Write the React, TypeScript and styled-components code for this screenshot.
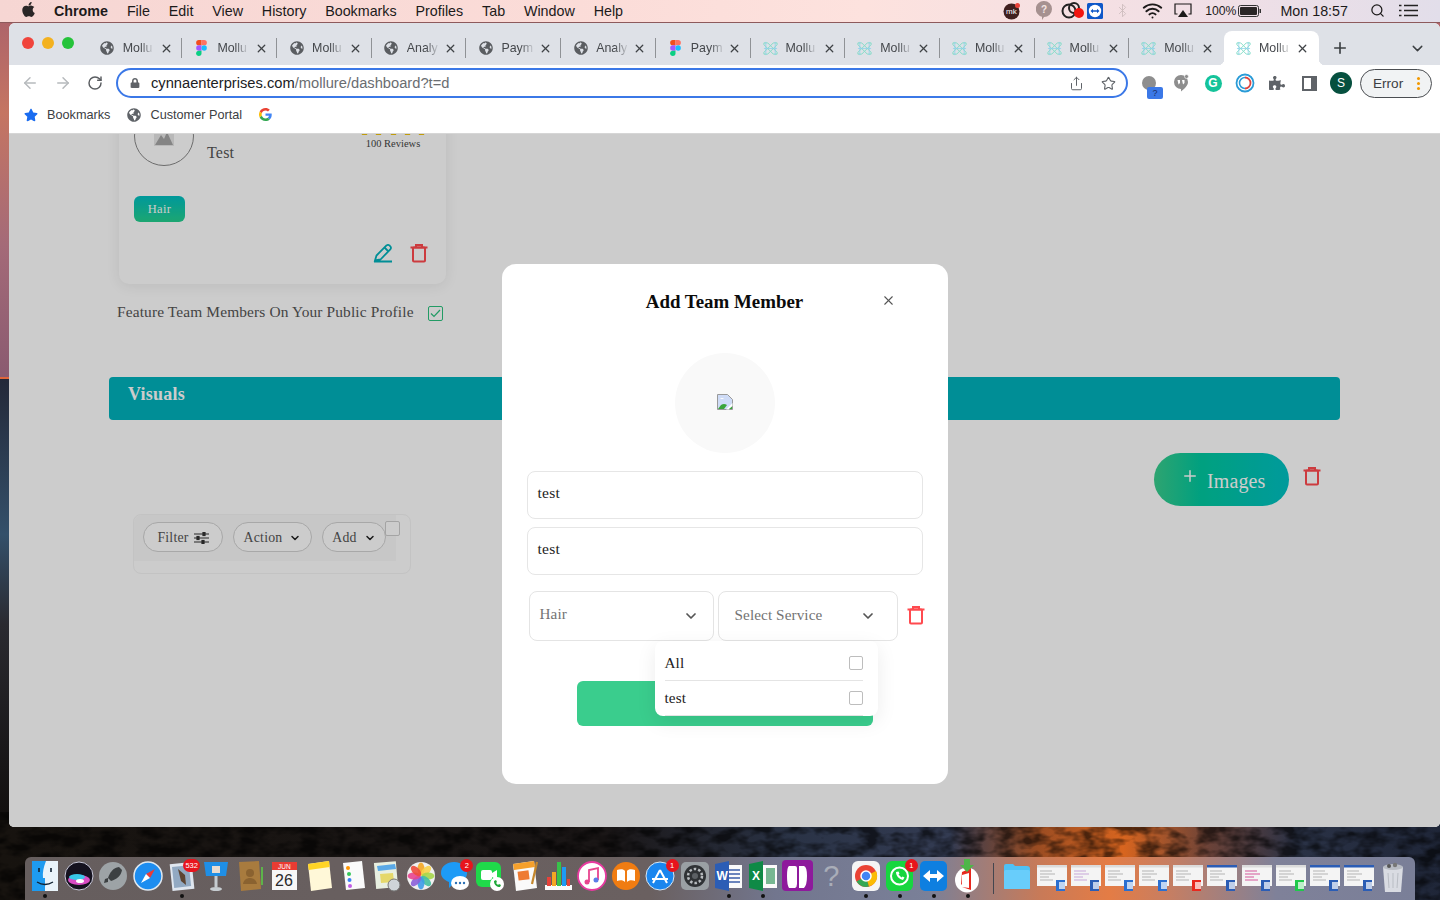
import React from "react";
import styled, { createGlobalStyle } from "styled-components";
import { ArrowLeft, ArrowRight, RotateCw, Star, Share, X, ChevronDown, Plus, Search, Wifi, Bluetooth } from "lucide-react";
import { FaApple, FaGlobeAmericas, FaPuzzlePiece, FaLock, FaStar } from "react-icons/fa";

const SERIF = `"Liberation Serif", "DejaVu Serif", serif`;
const SANS = `"Liberation Sans", Arial, sans-serif`;

const Global = createGlobalStyle`
  html, body { margin: 0; padding: 0; width: 1440px; height: 900px; overflow: hidden; }
  * { box-sizing: border-box; }
  body { font-family: ${SANS}; }
`;

const Desktop = styled.div`
  position: relative; width: 1440px; height: 900px; overflow: hidden; background: #1a1614;
`;
const WallpaperArt = styled.svg`
  position: absolute; inset: 0; width: 1440px; height: 900px;
`;

/* ---------- menu bar ---------- */
const MenuBar = styled.header`
  position: relative; height: 23px; display: flex; align-items: center; padding: 0 0 1px 20px;
  background: linear-gradient(to right, #f6d6d3, #fbdcd8 40%, #fde2de 60%, #f0dfe6 85%, #e2deea);
  border-bottom: 1px solid #8d5a5c; color: #1c1a1a; font-size: 14.3px;
`;
const AppleMark = styled.span`display: flex; margin-right: 17px; font-size: 16px; color: #2a2626; margin-top: -2px;`;
const MenuList = styled.nav`display: flex; gap: 18.85px;`;
const MenuItem = styled.span<{ $bold?: boolean }>`font-weight: ${(p) => (p.$bold ? 700 : 400)}; white-space: nowrap;`;
const StatusArea = styled.div`margin-left: auto; display: flex; align-items: center; height: 22px; padding-right: 22px;`;
const StatusSlot = styled.span<{ $ml: number; $fs?: number }>`
  display: flex; align-items: center; justify-content: center; margin-left: ${(p) => p.$ml}px;
  ${(p) => (p.$fs ? `font-size:${p.$fs}px;` : "")} white-space: nowrap; color: #1c1a1a;
`;

/* ---------- browser ---------- */
const BrowserWindow = styled.div`
  position: relative; margin-left: 9px; height: 804px; display: flex; flex-direction: column;
  border-radius: 6px 6px 5px 5px; overflow: hidden; background: #fff;
`;
const TabStrip = styled.div`
  height: 42px; background: #dee1e7; display: flex; align-items: flex-end; flex: none;
`;
const Lights = styled.div`width: 78.7px; height: 100%; display: flex; gap: 8px; padding: 14px 0 0 13px; flex: none;`;
const Light = styled.span<{ $c: string }>`width: 12px; height: 12px; border-radius: 50%; background: ${(p) => p.$c};`;
const TabRow = styled.div`display: flex; align-items: flex-end; height: 34px;`;
const Tab = styled.div<{ $active?: boolean; $sep?: boolean }>`
  position: relative; width: 94.7px; height: 34px; display: flex; align-items: center; padding: 0 9.5px 0 12px;
  color: #45484c; font-size: 12.4px;
  ${(p) => (p.$active ? "background:#fff;border-radius:8px 8px 0 0;" : "")}
  ${(p) => p.$sep ? `&::after{content:"";position:absolute;right:0;top:7px;height:20px;width:1px;background:#8f9296;}` : ""}
  ${(p) => p.$active ? `
    &::before{content:"";position:absolute;left:-6px;bottom:0;width:6px;height:6px;background:radial-gradient(circle at 0 0,transparent 6px,#fff 6.5px);}
    &::after{content:"";position:absolute;right:-6px;bottom:0;width:6px;height:6px;background:radial-gradient(circle at 100% 0,transparent 6px,#fff 6.5px);}
  ` : ""}
`;
const TabIcon = styled.span`width: 15px; height: 15px; display: flex; align-items: center; justify-content: center; flex: none; color: #5a5d61;`;
const TabTitle = styled.span`
  margin-left: 8px; white-space: nowrap;
  -webkit-mask-image: linear-gradient(to right, #000 60%, rgba(0,0,0,.15) 100%);
  mask-image: linear-gradient(to right, #000 60%, rgba(0,0,0,.15) 100%);
`;
const TabClose = styled.span`margin-left: auto; display: flex; color: #3f4246;`;
const StripTail = styled.div`display: flex; align-items: center; height: 34px; flex: 1; color: #3c4043; padding-left: 12px; padding-right: 14px; justify-content: space-between;`;

const Toolbar = styled.div`
  height: 36px; flex: none; background: #fff; display: flex; align-items: center; padding-left: 12px; color: #b4b7ba;
`;
const NavButton = styled.span<{ $ml?: number; $dark?: boolean }>`
  display: flex; margin-left: ${(p) => p.$ml ?? 0}px; color: ${(p) => (p.$dark ? "#5a5d61" : "#b7babd")};
`;
const Omnibox = styled.div`
  margin-left: 13px; width: 1012px; height: 30px; border: 2px solid #3b78e7; border-radius: 15px; display: flex;
  align-items: center; padding: 0 10px 0 12px; font-size: 14.7px; color: #6a6d71; background: #fff;
`;
const LockMark = styled.span`display: flex; color: #5f6368; margin-right: 11px;`;
const UrlHost = styled.span`color: #202124;`;
const OmniActions = styled.span`margin-left: auto; display: flex; gap: 17px; color: #5f6368;`;
const ExtRow = styled.div`display: flex; margin-left: 5px; align-items: center;`;
const ExtSlot = styled.span`position: relative; width: 32px; height: 28px; display: flex; align-items: center; justify-content: center; color: #5f6368;`;
const QuestionBadge = styled.span`
  position: absolute; right: 2px; bottom: -2px; width: 16px; height: 12px; border-radius: 2px; background: #3b78e7;
  color: #1a2f66; font-size: 9px; text-align: center; line-height: 12px;
`;
const GrammarlyDot = styled.span`
  width: 17px; height: 17px; border-radius: 50%; background: #15c39a; color: #fff; font-size: 12px; font-weight: 700;
  display: flex; align-items: center; justify-content: center;
`;
const ProfileDot = styled.span`
  width: 22px; height: 22px; border-radius: 50%; background: #06503f; color: #fff; font-size: 12px;
  display: flex; align-items: center; justify-content: center;
`;
const ErrorPill = styled.div`
  margin-left: 3px; width: 72px; height: 29px; border: 1.5px solid #4b4e52; border-radius: 15px; background: #f1f3f4;
  display: flex; align-items: center; justify-content: space-between; padding: 0 11px 0 12px; font-size: 13.6px; color: #3c4043;
`;
const Kebab = styled.span`display: flex; flex-direction: column; gap: 2px;`;
const KebabDot = styled.i`width: 3px; height: 3px; border-radius: 50%; background: #f29900; display: block;`;

const BookmarksBar = styled.div`
  height: 33px; flex: none; background: #fff; display: flex; align-items: center; padding: 0 0 5px 15px;
  font-size: 12.7px; color: #3c4043; border-bottom: 1px solid #d6d6d6;
`;
const Bookmark = styled.span<{ $ml?: number }>`display: flex; align-items: center; gap: 9px; margin-left: ${(p) => p.$ml ?? 0}px;`;

/* ---------- page behind the modal ---------- */
const Page = styled.main`position: relative; flex: 1; overflow: hidden; background: #fff; font-family: ${SERIF};`;
const MemberCard = styled.section`
  margin: -70px 0 0 110px; width: 327px; height: 220px; padding: 42px 17px 0 15px; border-radius: 10px; background: #fff;
  box-shadow: 0 2px 14px rgba(0,0,0,.08);
`;
const CardTop = styled.div`display: flex; height: 60px;`;
const CardAvatar = styled.div`
  width: 60px; height: 60px; border-radius: 50%; border: 1px solid #888; display: flex; align-items: center; justify-content: center; flex: none;
`;
const MemberName = styled.div`margin: 37px 0 0 13px; font-size: 16px; line-height: 20px; color: #555; letter-spacing: .2px;`;
const Rating = styled.div`margin: 23px 3px 0 auto; width: 66px; text-align: center;`;
const StarRow = styled.div`display: flex; justify-content: space-between; color: #f1c40f; height: 6px; overflow: hidden;`;
const ReviewCount = styled.div`font-size: 10.5px; line-height: 12px; color: #444; margin-top: 3px; white-space: nowrap;`;
const Tag = styled.div`
  margin-top: 30px; width: 51px; height: 26px; border-radius: 6px; background: linear-gradient(#00bfc2, #24d08e);
  color: #fff; font-size: 12.5px; padding-top: 1px; display: flex; align-items: center; justify-content: center; letter-spacing: .3px;
`;
const CardActions = styled.div`margin-top: 21px; display: flex; justify-content: flex-end; gap: 16px; align-items: center;`;
const FeatureRow = styled.div`margin: 22px 0 0 108px; width: 326px; height: 15px; display: flex; align-items: center; justify-content: space-between;`;
const FeatureLabel = styled.span`font-size: 15.4px; color: #555; letter-spacing: .14px; white-space: nowrap; margin-top: -3px;`;
const GreenCheck = styled.span`
  width: 15px; height: 15px; border: 1px solid #2bc27e; border-radius: 2px; display: flex; align-items: center; justify-content: center;
`;
const SectionBar = styled.div`
  margin: 56px 0 0 100px; width: 1231px; height: 43px; background: #00b2bc; border-radius: 4px; padding: 7px 19px;
  color: #fff; font-size: 18px; font-weight: 700; letter-spacing: .25px;
`;
const ImagesRow = styled.div`margin: 33px 0 0 0; width: 1313px; display: flex; justify-content: flex-end; align-items: flex-start;`;
const ImagesButton = styled.div`
  width: 135px; height: 53px; border-radius: 27px; background: linear-gradient(to right, #3acd8d, #00c9a0 35%, #00c1c3);
  color: #fff; display: flex; align-items: center; padding-left: 27px; gap: 8px; font-size: 20px; letter-spacing: .1px;
`;
const ImagesPlus = styled.span`display: flex; margin-top: -8px;`;
const ImagesLabel = styled.span`margin-top: 4px;`;
const TrashGap = styled.span`margin: 13px 0 0 13px; display: flex;`;
const FilterPanel = styled.div`
  position: relative; margin: 8px 0 0 124px; width: 278px; height: 60px; border: 1px solid #f4f4f4; border-radius: 8px; background: #ffffff;
`;
const FilterBar = styled.div`
  width: 262px; height: 46px; background: #f9f9f9; display: flex; gap: 10px; padding: 7px 0 0 9px; border-radius: 8px 0 0 0;
`;
const PillButton = styled.div<{ $w: number; $gap: number }>`
  width: ${(p) => p.$w}px; height: 30px; flex: none; border-radius: 15px; border: 1px solid #d2d2d2; background: #fff; padding-top: 1px;
  display: flex; align-items: center; justify-content: center; gap: ${(p) => p.$gap}px; font-size: 13.8px; color: #555; letter-spacing: .2px;
`;
const CornerCheck = styled.span`
  position: absolute; left: 251px; top: 6px; width: 15px; height: 15px; border: 1px solid #cdcdcd; border-radius: 2px; background: #fff;
`;

/* ---------- modal ---------- */
const Overlay = styled.div`
  position: absolute; inset: 0; background: rgba(0,0,0,.2); display: flex; justify-content: center; align-items: flex-start; padding-top: 130px;
`;
const Modal = styled.div`
  position: relative; width: 446px; height: 520px; background: #fff; border-radius: 14px; padding: 0 25px;
`;
const ModalHeader = styled.div`
  display: grid; grid-template-columns: 1fr auto 1fr; align-items: center; padding-top: 26px; height: 49px;
`;
const ModalTitle = styled.h2`
  margin: 0; font-size: 18.9px; line-height: 23px; font-weight: 700; color: #0b0b0b; white-space: nowrap; grid-column: 2;
`;
const CloseButton = styled.span`grid-column: 3; justify-self: end; margin: -2px 27px 0 0; display: flex; color: #555;`;
const PhotoCircle = styled.div`
  margin: 40px auto 0; width: 100px; height: 100px; border-radius: 50%; background: #f9f9f9; display: flex; align-items: center; justify-content: center; padding-bottom: 2px;
`;
const TextField = styled.div<{ $mt: number }>`
  margin-top: ${(p) => p.$mt}px; height: 48px; border: 1px solid #e6e6e6; border-radius: 8px; padding: 11px 10px 0; font-size: 15.5px; line-height: 20px; color: #222; letter-spacing: .25px;
`;
const SelectRow = styled.div`margin: 16px 0 0 2px; display: flex; align-items: center;`;
const SelectBox = styled.div<{ $w: number; $ml: number; $pl: number; $pr: number }>`
  width: ${(p) => p.$w}px; height: 50px; flex: none; margin-left: ${(p) => p.$ml}px; border: 1px solid #e4e4e4; border-radius: 8px;
  display: flex; align-items: center; justify-content: space-between; padding: 0 ${(p) => p.$pr}px 0 ${(p) => p.$pl}px;
  font-size: 15.2px; color: #737373; letter-spacing: .1px;
`;
const SelectLabel = styled.span<{ $up: number }>`margin-top: -${(p) => p.$up}px;`;
const SelectTrash = styled.span`margin: -3px 0 0 8px; display: flex;`;
const SubmitButton = styled.div`margin: 40px auto 0; width: 296px; height: 45px; background: #3acd8d; border-radius: 6px;`;
const DropMenu = styled.div`
  position: absolute; left: 153px; top: 377px; width: 223px; height: 75px; background: #fff; border-radius: 8px; padding: 5px 15px 0 10px;
  box-shadow: 0 6px 20px rgba(0,0,0,.08);
`;
const DropRow = styled.div`
  height: 35px; display: flex; align-items: center; justify-content: space-between; border-bottom: 1px solid #e4e4e4; font-size: 15.2px; color: #222; letter-spacing: .1px;
`;
const DropCheck = styled.span`width: 14px; height: 14px; border: 1px solid #bdbdbd; border-radius: 2px;`;

/* ---------- dock ---------- */
const Dock = styled.footer`
  position: absolute; left: 25px; bottom: 0; width: 1390px; height: 43px; border-radius: 6px 6px 0 0; display: flex; padding-left: 3px;
  background: linear-gradient(to right, #665e5e 0, #6a6060 45%, #72768e 54%, #7a8098 65%, #c87a58 73%, #e47c45 78%, #c97e60 82%, #7f8199 90%, #7a7f98 100%);
`;
const DockSlot = styled.div`position: relative; width: 34.2px; height: 43px; flex: none; display: flex; justify-content: center; padding-top: 2px;`;
const DockBadge = styled.span`
  position: absolute; top: 2px; right: -1px; min-width: 13px; height: 13px; padding: 0 2px; border-radius: 7px; background: #e8141c; color: #fff; font-size: 7.5px;
  line-height: 13px; text-align: center; font-family: ${SANS};
`;
const RunDot = styled.i`position: absolute; left: 50%; bottom: 2px; margin-left: -2px; width: 4px; height: 4px; border-radius: 50%; background: #111;`;
const DockDivider = styled.div`width: 15px; flex: none; display: flex; justify-content: center; padding-top: 6px; height: 37px;`;
const DockLine = styled.i`width: 1px; height: 31px; background: #44464f; display: block; margin-left: 1px;`;
const HelpGlyph = styled.span`font-size: 29px; line-height: 34px; height: 34px; color: #a9adb8; font-family: ${SANS};`;

/* ---------- small drawings ---------- */
const Trash = ({ c, s = 20 }: { c: string; s?: number }) => (
  <svg width={s} height={s} viewBox="0 0 20 20" fill="none" stroke={c} strokeWidth="2">
    <path d="M1.5 4.5h17M7 4.5V2h6v2.5" />
    <rect x="4" y="4.5" width="12" height="14" rx="1" />
  </svg>
);
const Pen = () => (
  <svg width="20" height="20" viewBox="0 0 20 20" fill="none" stroke="#00b2bc" strokeWidth="1.8">
    <path d="M1 18.500h18M2 17.500l1.500-5L13.500 2.500a2 2 0 0 1 3 0l.8 .8a2 2 0 0 1 0 3L7.500 16.500z" />
    <path d="M11.500 4.500l4 4" />
  </svg>
);
const ImageGlyph = () => (
  <svg width="20" height="19" viewBox="0 0 20 19"><rect width="20" height="19" fill="#e6e6e6" /><path d="M1 18L7 8l3 4 3-7 6 13z" fill="#a6a6a6" /></svg>
);
const BrokenImage = () => (
  <svg width="16" height="16" viewBox="0 0 16 16">
    <path d="M.5.5h10l5 5v10H.5z" fill="#cfdcf7" stroke="#9a9a9a" />
    <path d="M3 5c1-1.500 3-1.500 4 0z" fill="#fff" />
    <path d="M1 15l3-4c2-1.500 4-1.500 6 0l-3 4z" fill="#3aa53a" />
    <path d="M9 15.500l6.500-6.500v3l-3.500 3.500z" fill="#fff" />
    <path d="M12 15l3-2.500V15z" fill="#3aa53a" />
  </svg>
);
const Tick = () => (
  <svg width="11" height="9" viewBox="0 0 11 9" fill="none" stroke="#2bc27e" strokeWidth="1.2"><path d="M1 4.500l3 3L10 1" /></svg>
);
const FilterGlyph = () => (
  <svg width="15" height="12" viewBox="0 0 15 12" stroke="#333" strokeWidth="1.2" fill="#333">
    <path d="M0 2h15M0 6h15M0 10h15" />
    <rect x="9" y=".5" width="2" height="3" /><rect x="3" y="4.500" width="2" height="3" /><rect x="8" y="8.500" width="2" height="3" />
  </svg>
);
const Figma = () => (
  <svg width="11" height="16" viewBox="0 0 12 18">
    <path d="M6 0H3a3 3 0 0 0 0 6h3z" fill="#f24e1e" /><path d="M6 0h3a3 3 0 0 1 0 6H6z" fill="#ff7262" />
    <path d="M6 6H3a3 3 0 0 0 0 6h3z" fill="#a259ff" /><circle cx="9" cy="9" r="3" fill="#1abcfe" />
    <path d="M6 12H3a3 3 0 1 0 3 3z" fill="#0acf83" />
  </svg>
);
const Knot = () => (
  <svg width="16" height="15" viewBox="0 0 16 15" fill="none" strokeWidth="1">
    <g stroke="#7fdcc6">
      <path d="M1 1.500l4 0 3 3-3 3-4-4zM15 1.500l-4 0-3 3 3 3 4-4z" />
      <path d="M1 13.500l4 0 3-3-3-3-4 4zM15 13.500l-4 0-3-3 3-3 4 4z" />
    </g>
    <g stroke="#8bd0ea" opacity=".8">
      <path d="M3 .5v14M13 .5v14M1 7.500h14" />
    </g>
  </svg>
);
const GoogleG = () => (
  <svg width="13" height="13" viewBox="0 0 48 48">
    <path fill="#ea4335" d="M24 9.500c3.500 0 6.600 1.200 9 3.500l6.800-6.800C35.700 2.400 30.300 0 24 0 14.600 0 6.500 5.400 2.600 13.200l7.900 6.100C12.400 13.600 17.700 9.500 24 9.500z" />
    <path fill="#4285f4" d="M47 24.500c0-1.600-.1-3.100-.4-4.500H24v9h13c-.6 3-2.200 5.500-4.700 7.200l7.600 5.900C44.300 37.900 47 31.800 47 24.500z" />
    <path fill="#fbbc05" d="M10.500 28.700C10 27.300 9.800 25.700 9.800 24s.3-3.300.7-4.700l-7.900-6.100C1 16.400 0 20.100 0 24s1 7.600 2.600 10.800z" />
    <path fill="#34a853" d="M24 48c6.500 0 11.900-2.100 15.900-5.900l-7.600-5.900c-2.200 1.400-5 2.300-8.300 2.300-6.300 0-11.600-4.100-13.500-9.800l-7.900 6.100C6.500 42.600 14.600 48 24 48z" />
  </svg>
);
const Battery = () => (
  <svg width="24" height="12" viewBox="0 0 24 12"><rect x=".5" y=".5" width="20" height="11" rx="2" fill="none" stroke="#333" /><rect x="2" y="2" width="17" height="8" rx="1" fill="#2a2626" /><rect x="21.500" y="4" width="1.500" height="4" fill="#333" /></svg>
);
const Airplay = () => (
  <svg width="18" height="15" viewBox="0 0 18 15"><path d="M3.500 11H1V1h16v10h-2.500" fill="none" stroke="#1c1a1a" strokeWidth="1.200" /><path d="M9 7l5 7H4z" fill="#1c1a1a" /></svg>
);
const ListGlyph = () => (
  <svg width="19" height="13" viewBox="0 0 19 13" stroke="#222" strokeWidth="1.600"><path d="M5 1.500h14M5 6.500h14M5 11.500h14M0 1.500h2.500M0 6.500h2.500M0 11.500h2.500" /></svg>
);
const MkBadge = () => (
  <svg width="18" height="18" viewBox="0 0 18 18"><circle cx="8.500" cy="9.500" r="8" fill="#40201f" /><text x="3" y="12" fontSize="8" fill="#fff" fontFamily="Liberation Sans">mk</text><circle cx="14.500" cy="3.500" r="2.500" fill="#e8423a" /></svg>
);
const AskBubble = () => (
  <svg width="16" height="19" viewBox="0 0 16 19"><path d="M8 0a8 8 0 0 1 0 16l-2 3v-3.200A8 8 0 0 1 8 0z" fill="#a69190" /><text x="5" y="12" fontSize="10" fill="#f4e4e2" fontFamily="Liberation Sans" fontWeight="700">?</text></svg>
);
const CloudRec = () => (
  <svg width="24" height="17" viewBox="0 0 24 17"><circle cx="8" cy="9" r="6.500" fill="none" stroke="#222" strokeWidth="2" /><circle cx="13" cy="6" r="5" fill="none" stroke="#222" strokeWidth="2" /><circle cx="18" cy="11" r="5" fill="#f0140f" /></svg>
);
const TvSquare = ({ s = 16 }: { s?: number }) => (
  <svg width={s} height={s} viewBox="0 0 16 16"><rect width="16" height="16" rx="1.500" fill="#0e57c8" /><circle cx="8" cy="8" r="6.200" fill="#fff" /><path d="M3.500 8l2.500-2.200v1.400h4V5.800L12.500 8 10 10.200V8.800H6v1.400z" fill="#0e57c8" /></svg>
);
const Hangout = () => (
  <svg width="16" height="19" viewBox="0 0 16 19"><path d="M8 1a7 7 0 0 1 7 7c0 4-4 7-7 9.500V15a7 7 0 0 1 0-14z" fill="#8e8e8e" /><path d="M4.500 6h2.500v3l-1.500 1.500zM9 6h2.500v3L10 10.500z" fill="#fff" /><circle cx="13.500" cy="2.500" r="2" fill="#8e8e8e" stroke="#fff" strokeWidth=".6" /></svg>
);
const ChromeSync = () => (
  <svg width="20" height="20" viewBox="0 0 20 20" fill="none"><circle cx="10" cy="10" r="8.500" stroke="#2a9bd7" strokeWidth="1.800" /><path d="M10 4.500a5.500 5.500 0 0 1 0 11" stroke="#e0443e" strokeWidth="1.800" /><path d="M10 15.500a5.500 5.500 0 0 1 0-11" stroke="#2a9bd7" strokeWidth="1.500" /></svg>
);
const SidePanel = () => (
  <svg width="15" height="15" viewBox="0 0 15 15"><rect x="1" y="1" width="13" height="13" fill="none" stroke="#5f6368" strokeWidth="2" /><rect x="9" y="1" width="5" height="13" fill="#5f6368" /></svg>
);
const GrayBlob = () => <svg width="14" height="14" viewBox="0 0 14 14"><circle cx="7" cy="7" r="7" fill="#8e8e8e" /></svg>;

/* dock icons */
const I = ({ children }: { children: React.ReactNode }) => <svg width="32" height="34" viewBox="0 0 32 34">{children}</svg>;
const T = (p: any) => <text fontFamily="Liberation Sans" {...p} />;
const icons: Record<string, React.ReactNode> = {
  finder: <I><rect x="3" y="2" width="26" height="30" fill="#e9f4fb" /><path d="M3 2h14q-4 10-3 17h2v13H3z" fill="#1e9bf0" /><path d="M8 23q8 5 16 0" fill="none" stroke="#123" strokeWidth="1.300" /><path d="M10 9v4M22 9v4" stroke="#123" strokeWidth="1.600" /></I>,
  siri: <I><circle cx="16" cy="17" r="14" fill="#15121f" stroke="#c9c9d9" /><ellipse cx="16" cy="21" rx="11" ry="5" fill="#d94bc4" /><ellipse cx="14" cy="18" rx="8" ry="3" fill="#38c6e8" /><ellipse cx="17" cy="22" rx="4" ry="2" fill="#fff" /></I>,
  launch: <I><circle cx="16" cy="17" r="14" fill="#9da3a6" /><path d="M22 8c-6 1-9 5-11 11l3 3c6-2 10-5 11-11z" fill="#3c4042" /><path d="M11 19l-3 1-1 4 4-1z" fill="#3c4042" /></I>,
  safari: <I><circle cx="16" cy="17" r="14" fill="#1d8df0" stroke="#dfe8f0" strokeWidth="1.500" /><path d="M23 10l-9 5 4 4z" fill="#ef3b36" /><path d="M9 24l5-9 4 4z" fill="#fff" /></I>,
  mail: <I><rect x="5" y="4" width="22" height="27" fill="#dfe6ef" transform="rotate(-6 16 17)" /><rect x="7" y="7" width="17" height="21" fill="#92a9c2" transform="rotate(-6 16 17)" /><path d="M12 10l7 6 1 10-5-4z" fill="#5d4533" /></I>,
  keynote: <I><path d="M4 3h24l-2 14H6z" fill="#1f8fe6" /><rect x="12" y="7" width="8" height="7" fill="#e9dcd0" /><rect x="14.500" y="17" width="3" height="11" fill="#c6ccd0" /><ellipse cx="16" cy="30" rx="6" ry="2" fill="#c6ccd0" /></I>,
  contacts: <I><path d="M5 3l20-1 2 28-20 2z" fill="#a87b3e" /><rect x="27" y="8" width="2" height="18" fill="#5db34a" /><circle cx="16" cy="14" r="4" fill="#8a6230" /><path d="M9 25c1-8 13-8 14 0z" fill="#8a6230" /></I>,
  cal: <I><rect x="4" y="3" width="25" height="28" fill="#f7f7f7" /><rect x="4" y="3" width="25" height="8" fill="#e93c33" /><T x="10" y="10" fontSize="6.500" fill="#fff">JUN</T><T x="7" y="27" fontSize="16" fill="#2a2a2a">26</T></I>,
  notes: <I><path d="M5 5l21-3 3 27-21 3z" fill="#fff8d8" /><path d="M5 5l21-3 .7 6-21 3z" fill="#ffd426" /></I>,
  remind: <I><path d="M6 4l19-2 3 27-19 2z" fill="#fafafa" /><circle cx="11" cy="9" r="2" fill="#ff9500" /><circle cx="12" cy="15" r="2" fill="#35c759" /><circle cx="12.500" cy="21" r="2" fill="#3b82f6" /><circle cx="13" cy="27" r="2" fill="#c25ce6" /></I>,
  maps: <I><rect x="4" y="3" width="22" height="26" fill="#e8efe0" transform="rotate(-5 16 16)" /><path d="M6 7l18-2 1 5-18 2z" fill="#5aa9e6" /><path d="M9 15l13-1 1 9-13 1z" fill="#e5d86a" /><circle cx="23" cy="26" r="6" fill="#cfd4d8" stroke="#777" /></I>,
  photos: <I><circle cx="16" cy="17" r="14" fill="#f0f0f0" />{["#f5a623","#f8d24a","#a6d64a","#44c0a0","#3d9be9","#8b5fd9","#e8448f","#ee4c3c"].map((c, i) => <ellipse key={c} cx="16" cy="10" rx="3.500" ry="6.500" fill={c} opacity=".9" transform={`rotate(${i * 45} 16 17)`} />)}</I>,
  msg: <I><path d="M15 3c8 0 13 5 13 11s-5 10-13 10l-5 5v-6C5 21 2 18 2 14 2 7 8 3 15 3z" fill="#1d9bf6" /><ellipse cx="21" cy="24" rx="9" ry="7" fill="#fff" /><circle cx="17" cy="24" r="1.200" fill="#2b6fb5" /><circle cx="21" cy="24" r="1.200" fill="#2b6fb5" /><circle cx="25" cy="24" r="1.200" fill="#2b6fb5" /></I>,
  face: <I><rect x="2" y="3" width="25" height="25" rx="6" fill="#1fd94a" /><rect x="7" y="11" width="11" height="10" rx="2" fill="#fff" /><path d="M18 14l5-3v10l-5-3z" fill="#fff" /><circle cx="23" cy="25" r="7" fill="#fff" /><path d="M20 22c0 4 3 6 6 6l1-2-2-1-1 1-2-2 1-1-1-2z" fill="#1fa83a" /></I>,
  pages: <I><path d="M5 5l21-3 3 27-21 3z" fill="#fafafa" /><path d="M5 5l21-3 1 6-21 3z" fill="#f5a02c" /><rect x="10" y="12" width="11" height="9" fill="#ee7b33" transform="rotate(-7 15 16)" /><path d="M29 3l-5 22" stroke="#c5872c" strokeWidth="2.200" /></I>,
  numbers: <I><rect x="3" y="26" width="27" height="5" fill="#fafafa" /><rect x="5" y="18" width="4" height="9" fill="#e8423a" /><rect x="10" y="13" width="4" height="14" fill="#f5a623" /><rect x="15" y="3" width="4" height="24" fill="#38c24a" /><rect x="20" y="8" width="4" height="19" fill="#1d9bf6" /><rect x="25" y="20" width="3" height="7" fill="#e8423a" /></I>,
  music: <I><circle cx="16" cy="17" r="14" fill="#fff" stroke="#e83aa0" strokeWidth="1.800" /><path d="M13 23V11l9-2v12" fill="none" stroke="#e8448f" strokeWidth="1.800" /><circle cx="11" cy="23" r="2.500" fill="#e8448f" /><circle cx="20" cy="21" r="2.500" fill="#5b7de9" /></I>,
  books: <I><circle cx="16" cy="17" r="14" fill="#f07c12" /><path d="M7 11c3-1 7-1 8 1v11c-2-2-5-2-8-1zM25 11c-3-1-7-1-8 1v11c2-2 5-2 8-1z" fill="#fff" /></I>,
  store: <I><circle cx="16" cy="17" r="14" fill="#1a86ee" stroke="#d8e6f2" /><path d="M9 24l7-13M23 24l-7-13M8 20h16" stroke="#fff" strokeWidth="2" fill="none" /></I>,
  prefs: <I><rect x="2" y="3" width="28" height="28" rx="5" fill="#9aa0a4" /><circle cx="16" cy="17" r="11" fill="#2f3235" /><circle cx="16" cy="17" r="7" fill="none" stroke="#b8bcbf" strokeWidth="2.500" strokeDasharray="2.500 2" /><circle cx="16" cy="17" r="3" fill="#5c6064" /></I>,
  word: <I><rect x="10" y="6" width="19" height="23" fill="#fafafa" /><path d="M13 11h14M13 15h14M13 19h14M13 23h14" stroke="#3b5ea8" strokeWidth="1.300" /><path d="M2 5l14-3v30L2 29z" fill="#2b5db5" /><T x="3.500" y="21" fontSize="12" fill="#fff" fontWeight="700">W</T></I>,
  excel: <I><rect x="10" y="6" width="20" height="23" fill="#fafafa" /><path d="M19 9h9v16h-9z" fill="#1f8a4c" opacity=".6" /><path d="M2 5l14-3v30L2 29z" fill="#0f8a46" /><T x="5" y="21" fontSize="12" fill="#fff" fontWeight="700">X</T></I>,
  purple: <I><rect x="1" y="1" width="31" height="31" rx="4" fill="#8e1a9c" /><path d="M8 7q-2 1-2 10t2 12h6q2-1 2-4V9q0-2-2-2zM18 7h5q3 1 3 10t-3 12h-5z" fill="#fff" /></I>,
  ask: <HelpGlyph>?</HelpGlyph>,
  chrome: <I><rect x="2" y="2" width="28" height="30" rx="6" fill="#f5f5f5" /><circle cx="16" cy="17" r="11" fill="#ea4335" /><path d="M16 17L6.500 22.500A11 11 0 0 0 19 27.600z" fill="#34a853" /><path d="M16 17l3 10.600A11 11 0 0 0 26 12z" fill="#fbbc05" /><circle cx="16" cy="17" r="5" fill="#4285f4" stroke="#fff" strokeWidth="1.500" /></I>,
  whats: <I><rect x="2" y="2" width="27" height="30" rx="6" fill="#17d63f" /><circle cx="15.500" cy="17" r="8.500" fill="none" stroke="#fff" strokeWidth="2" /><path d="M12 13c0 4 3 7 7 8l1.500-2.500-2-1-1 1-3-3 1-1-1-2z" fill="#fff" /></I>,
  tv: <I><rect x="2" y="2" width="27" height="30" rx="5" fill="#0e7fe0" /><path d="M5 17l7-6v4h7v-4l7 6-7 6v-4h-7v4z" fill="#fff" /></I>,
  office: <I><ellipse cx="15" cy="21" rx="12" ry="12.500" fill="#fff" /><path d="M10 13l9-4v22l-9-3 7 1V14l-7 2v9l-1 1z" fill="#e8281e" /><path d="M12 0h6v6h4l-7 7-7-7h4z" fill="#4eb648" /></I>,
  folder: <I><path d="M3 7q0-2 2-2h7l2 2h12q3 0 3 3v20H3z" fill="#4fc1f5" /><rect x="3" y="11" width="26" height="19" rx="1.500" fill="#68cdfb" /></I>,
  trash: <I><path d="M6 8h20l-2 25H8z" fill="#e3e6ea" opacity=".9" /><ellipse cx="16" cy="8" rx="10" ry="3" fill="#b8bcc4" /><circle cx="12" cy="7" r="2" fill="#555" /><circle cx="18" cy="6" r="2.200" fill="#777" /><path d="M11 14l1 15M16 14v15M21 14l-1 15" stroke="#b9bdc4" /></I>,
};
const DocThumb = ({ badge, art, h = 21 }: { badge: string; art: string; h?: number }) => (
  <I>
    <rect x="1" y="6" width="30" height={h} fill="#f4f4f4" />
    <rect x="1" y="6" width="30" height="2.500" fill={art === "blue" ? "#2b5db5" : "#dcdcdc"} />
    <path d="M4 12h12M4 15h15M4 18h9M4 21h13" stroke={art === "pink" ? "#d4569a" : art === "yellow" ? "#c7a6d8" : "#b4b4b4"} strokeWidth="1" />
    <rect x="20" y="21" width="9" height="11" fill={badge} />
    <rect x="23" y="23" width="6" height="7" fill="#fff" opacity=".7" />
  </I>
);

const tabs: { icon: "globe" | "figma" | "knot"; title: string; active?: boolean }[] = [
  { icon: "globe", title: "Mollu" }, { icon: "figma", title: "Mollu" }, { icon: "globe", title: "Mollu" },
  { icon: "globe", title: "Analy" }, { icon: "globe", title: "Paym" }, { icon: "globe", title: "Analy" },
  { icon: "figma", title: "Paym" }, { icon: "knot", title: "Mollu" }, { icon: "knot", title: "Mollu" },
  { icon: "knot", title: "Mollu" }, { icon: "knot", title: "Mollu" }, { icon: "knot", title: "Mollu" },
  { icon: "knot", title: "Mollu", active: true },
];
const menus = ["File", "Edit", "View", "History", "Bookmarks", "Profiles", "Tab", "Window", "Help"];
const dockLeft: { k: string; badge?: string; run?: boolean }[] = [
  { k: "finder", run: true }, { k: "siri" }, { k: "launch" }, { k: "safari" }, { k: "mail", badge: "532", run: true }, { k: "keynote" },
  { k: "contacts" }, { k: "cal" }, { k: "notes" }, { k: "remind" }, { k: "maps" }, { k: "photos" }, { k: "msg", badge: "2" }, { k: "face" },
  { k: "pages" }, { k: "numbers" }, { k: "music" }, { k: "books" }, { k: "store", badge: "1" }, { k: "prefs" }, { k: "word", run: true },
  { k: "excel", run: true }, { k: "purple" }, { k: "ask" }, { k: "chrome", run: true }, { k: "whats", badge: "1", run: true }, { k: "tv", run: true }, { k: "office", run: true },
];
const docs = [
  { badge: "#2b6fd0", art: "gray" }, { badge: "#2b5db5", art: "yellow" }, { badge: "#2b6fd0", art: "gray" }, { badge: "#2b6fd0", art: "gray" },
  { badge: "#e8281e", art: "gray" }, { badge: "#2b5db5", art: "blue" }, { badge: "#2b5db5", art: "pink" }, { badge: "#1fc94a", art: "gray" },
  { badge: "#2b5db5", art: "blue" }, { badge: "#2b5db5", art: "blue" },
];

const Wallpaper = () => (
  <WallpaperArt viewBox="0 0 1440 900" aria-hidden>
    <defs>
      <linearGradient id="sky" x1="0" y1="0" x2="0" y2="1">
        <stop offset="0" stopColor="#a8606c" /><stop offset=".3" stopColor="#c57562" /><stop offset=".65" stopColor="#a46a78" /><stop offset="1" stopColor="#8a5a70" />
      </linearGradient>
      <linearGradient id="rockLeft" x1="0" y1="0" x2="0" y2="1">
        <stop offset="0" stopColor="#232838" /><stop offset=".35" stopColor="#34506a" /><stop offset=".55" stopColor="#2a2a30" /><stop offset="1" stopColor="#100d0c" />
      </linearGradient>
      <linearGradient id="ground" x1="0" y1="0" x2="1" y2="0">
        <stop offset="0" stopColor="#17130f" /><stop offset=".42" stopColor="#1a1616" /><stop offset=".55" stopColor="#2a3346" /><stop offset=".66" stopColor="#333b52" /><stop offset=".72" stopColor="#9a4c22" /><stop offset=".78" stopColor="#d8651f" /><stop offset=".84" stopColor="#6a4238" /><stop offset=".9" stopColor="#2a3246" /><stop offset="1" stopColor="#1f2638" />
      </linearGradient>
      <filter id="rock"><feTurbulence type="fractalNoise" baseFrequency=".05 .09" numOctaves="3" seed="4" /><feColorMatrix values="0 0 0 0 0  0 0 0 0 0  0 0 0 0 0  0 0 0 -3 1.900" /></filter>
    </defs>
    <rect width="1440" height="377" fill="url(#sky)" />
    <rect y="377" width="1440" height="450" fill="url(#rockLeft)" />
    <rect y="377" width="9" height="2" fill="#e0653a" />
    <rect y="820" width="1440" height="80" fill="url(#ground)" />
    <rect y="820" width="1440" height="80" filter="url(#rock)" opacity=".6" />
  </WallpaperArt>
);

export default function App() {
  return (
    <>
      <Global />
      <Desktop>
        <Wallpaper />
        <MenuBar>
          <AppleMark><FaApple size={17} /></AppleMark>
          <MenuList>
            <MenuItem $bold>Chrome</MenuItem>
            {menus.map((m) => <MenuItem key={m}>{m}</MenuItem>)}
          </MenuList>
          <StatusArea>
            <StatusSlot $ml={0}><MkBadge /></StatusSlot>
            <StatusSlot $ml={15}><AskBubble /></StatusSlot>
            <StatusSlot $ml={9}><CloudRec /></StatusSlot>
            <StatusSlot $ml={2}><TvSquare /></StatusSlot>
            <StatusSlot $ml={12}><Bluetooth size={15} color="#cdbdbd" strokeWidth={1.4} /></StatusSlot>
            <StatusSlot $ml={12}><Wifi size={21} strokeWidth={2.2} /></StatusSlot>
            <StatusSlot $ml={11}><Airplay /></StatusSlot>
            <StatusSlot $ml={13} $fs={12.2}>100%</StatusSlot>
            <StatusSlot $ml={2}><Battery /></StatusSlot>
            <StatusSlot $ml={18}>Mon 18:57</StatusSlot>
            <StatusSlot $ml={22}><Search size={15} strokeWidth={2} /></StatusSlot>
            <StatusSlot $ml={14}><ListGlyph /></StatusSlot>
          </StatusArea>
        </MenuBar>

        <BrowserWindow>
          <TabStrip>
            <Lights>
              <Light $c="#f0443c" /><Light $c="#f3b11f" /><Light $c="#25c33a" />
            </Lights>
            <TabRow>
              {tabs.map((t, i) => (
                <Tab key={i} $active={t.active} $sep={!t.active && i < tabs.length - 2}>
                  <TabIcon>
                    {t.icon === "globe" && <FaGlobeAmericas size={14} />}
                    {t.icon === "figma" && <Figma />}
                    {t.icon === "knot" && <Knot />}
                  </TabIcon>
                  <TabTitle>{t.title}</TabTitle>
                  <TabClose><X size={13} strokeWidth={2.4} /></TabClose>
                </Tab>
              ))}
            </TabRow>
            <StripTail>
              <Plus size={18} strokeWidth={2.2} />
              <ChevronDown size={17} strokeWidth={2} />
            </StripTail>
          </TabStrip>

          <Toolbar>
            <NavButton><ArrowLeft size={18} strokeWidth={2} /></NavButton>
            <NavButton $ml={15}><ArrowRight size={18} strokeWidth={2} /></NavButton>
            <NavButton $ml={15} $dark><RotateCw size={16} strokeWidth={2.2} /></NavButton>
            <Omnibox>
              <LockMark><FaLock size={10} /></LockMark>
              <UrlHost>cynnaenterprises.com</UrlHost>/mollure/dashboard?t=d
              <OmniActions>
                <Share size={15} strokeWidth={1.6} />
                <Star size={15} strokeWidth={1.8} />
              </OmniActions>
            </Omnibox>
            <ExtRow>
              <ExtSlot><GrayBlob /><QuestionBadge>?</QuestionBadge></ExtSlot>
              <ExtSlot><Hangout /></ExtSlot>
              <ExtSlot><GrammarlyDot>G</GrammarlyDot></ExtSlot>
              <ExtSlot><ChromeSync /></ExtSlot>
              <ExtSlot><FaPuzzlePiece size={16} /></ExtSlot>
              <ExtSlot><SidePanel /></ExtSlot>
              <ExtSlot><ProfileDot>S</ProfileDot></ExtSlot>
            </ExtRow>
            <ErrorPill>Error<Kebab><KebabDot /><KebabDot /><KebabDot /></Kebab></ErrorPill>
          </Toolbar>

          <BookmarksBar>
            <Bookmark><FaStar size={14} color="#1a6cf0" />Bookmarks</Bookmark>
            <Bookmark $ml={17}><FaGlobeAmericas size={14} color="#5f6368" />Customer Portal</Bookmark>
            <Bookmark $ml={17}><GoogleG /></Bookmark>
          </BookmarksBar>

          <Page>
            <MemberCard>
              <CardTop>
                <CardAvatar><ImageGlyph /></CardAvatar>
                <MemberName>Test</MemberName>
                <Rating>
                  <StarRow>{[0, 1, 2, 3, 4].map((n) => <FaStar key={n} size={9} />)}</StarRow>
                  <ReviewCount>100 Reviews</ReviewCount>
                </Rating>
              </CardTop>
              <Tag>Hair</Tag>
              <CardActions><Pen /><Trash c="#ff4a4f" /></CardActions>
            </MemberCard>
            <FeatureRow>
              <FeatureLabel>Feature Team Members On Your Public Profile</FeatureLabel>
              <GreenCheck><Tick /></GreenCheck>
            </FeatureRow>
            <SectionBar>Visuals</SectionBar>
            <ImagesRow>
              <ImagesButton><ImagesPlus><Plus size={18} strokeWidth={2} /></ImagesPlus><ImagesLabel>Images</ImagesLabel></ImagesButton>
              <TrashGap><Trash c="#ff4a4f" /></TrashGap>
            </ImagesRow>
            <FilterPanel>
              <FilterBar>
                <PillButton $w={80} $gap={5}>Filter <FilterGlyph /></PillButton>
                <PillButton $w={79} $gap={7}>Action <ChevronDown size={12} strokeWidth={3} color="#222" /></PillButton>
                <PillButton $w={64} $gap={7}>Add <ChevronDown size={12} strokeWidth={3} color="#222" /></PillButton>
              </FilterBar>
              <CornerCheck />
            </FilterPanel>

            <Overlay>
              <Modal>
                <ModalHeader>
                  <ModalTitle>Add Team Member</ModalTitle>
                  <CloseButton><X size={15} strokeWidth={1.7} /></CloseButton>
                </ModalHeader>
                <PhotoCircle><BrokenImage /></PhotoCircle>
                <TextField $mt={18}>test</TextField>
                <TextField $mt={8}>test</TextField>
                <SelectRow>
                  <SelectBox $w={185} $ml={0} $pl={10} $pr={14}><SelectLabel $up={4}>Hair</SelectLabel><ChevronDown size={16} strokeWidth={2.6} color="#555" /></SelectBox>
                  <SelectBox $w={180} $ml={4} $pl={16} $pr={21}><SelectLabel $up={2}>Select Service</SelectLabel><ChevronDown size={16} strokeWidth={2.6} color="#555" /></SelectBox>
                  <SelectTrash><Trash c="#ff4a4f" s={20} /></SelectTrash>
                </SelectRow>
                <SubmitButton />
                <DropMenu>
                  <DropRow>All<DropCheck /></DropRow>
                  <DropRow>test<DropCheck /></DropRow>
                </DropMenu>
              </Modal>
            </Overlay>
          </Page>
        </BrowserWindow>

        <Dock>
          {dockLeft.map((d) => (
            <DockSlot key={d.k}>
              {icons[d.k]}
              {d.badge && <DockBadge>{d.badge}</DockBadge>}
              {d.run && <RunDot />}
            </DockSlot>
          ))}
          <DockDivider><DockLine /></DockDivider>
          <DockSlot>{icons.folder}</DockSlot>
          {docs.map((d, i) => <DockSlot key={i}><DocThumb badge={d.badge} art={d.art} /></DockSlot>)}
          <DockSlot>{icons.trash}</DockSlot>
        </Dock>
      </Desktop>
    </>
  );
}
